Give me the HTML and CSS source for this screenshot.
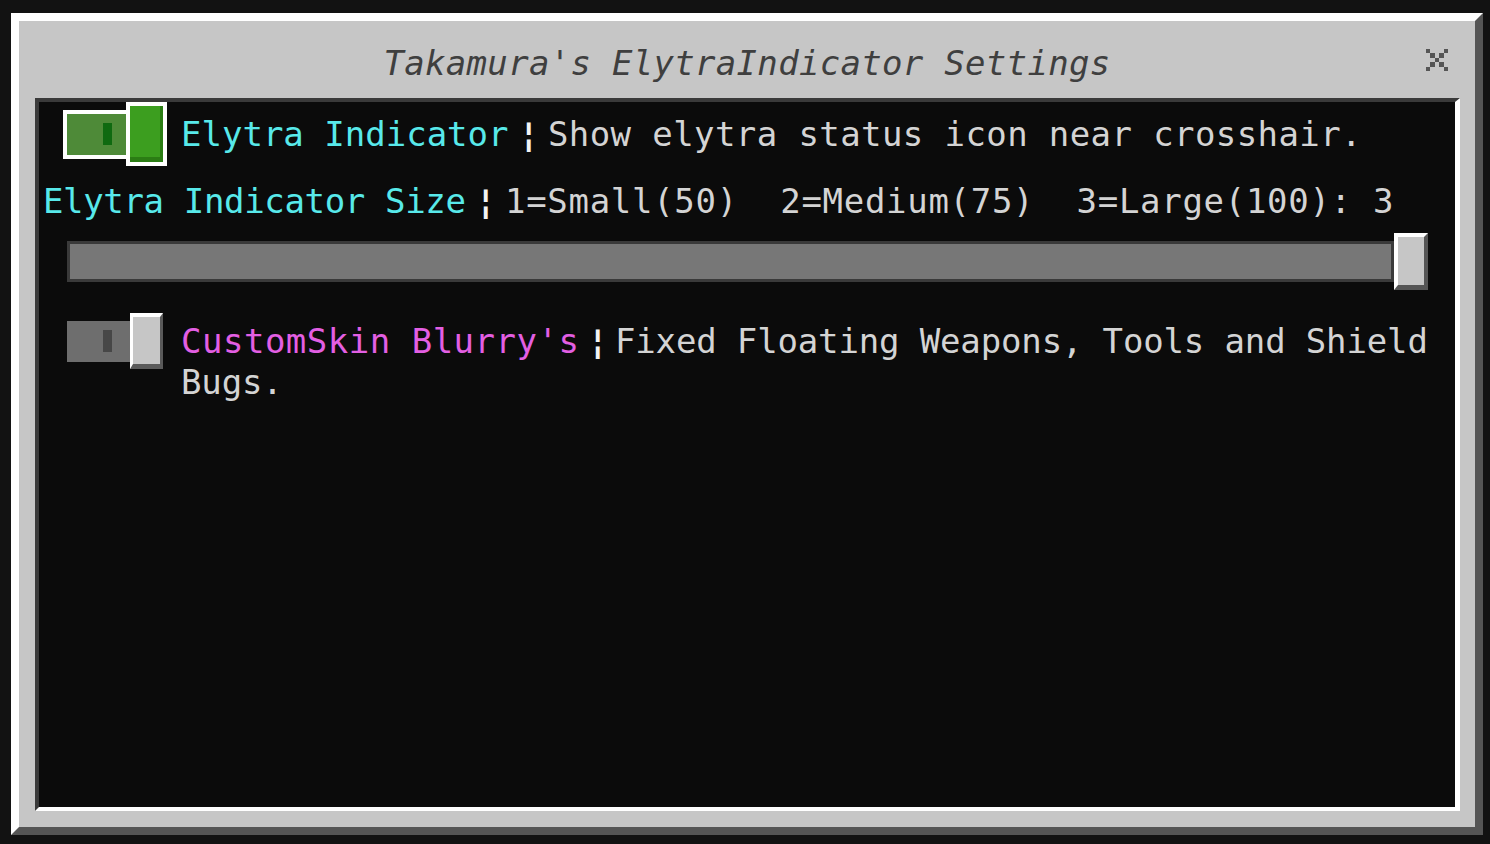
FILE: index.html
```html
<!DOCTYPE html>
<html lang="en">
<head>
<meta charset="utf-8">
<title>Takamura's ElytraIndicator Settings</title>
<link rel="stylesheet" href="styles.css">
</head>
<body>
<div class="screen">
  <div class="dialog">
    <div class="titlebar">
      <span class="spacer"></span>
      <h1 class="title">Takamura's ElytraIndicator Settings</h1>
      <button class="close" aria-label="Close">
        <svg viewBox="0 0 5 5" width="22" height="22" shape-rendering="crispEdges">
          <rect x="0" y="0" width="1" height="1"/>
          <rect x="4" y="0" width="1" height="1"/>
          <rect x="1" y="1" width="1" height="1"/>
          <rect x="3" y="1" width="1" height="1"/>
          <rect x="2" y="2" width="1" height="1"/>
          <rect x="1" y="3" width="1" height="1"/>
          <rect x="3" y="3" width="1" height="1"/>
          <rect x="0" y="4" width="1" height="1"/>
          <rect x="4" y="4" width="1" height="1"/>
        </svg>
      </button>
    </div>
    <div class="panel">
      <div class="toggle-row">
        <div class="toggle on focused">
          <span class="track"><i class="notch"></i></span>
          <span class="knob"></span>
        </div>
        <p class="text ls-r1d"><span class="label aqua ls-r1l">Elytra Indicator</span><span class="sep">¦</span>Show elytra status icon near crosshair.</p>
      </div>

      <div class="slider-block">
        <p class="slider-label ls-r2d"><span class="label aqua ls-r2l">Elytra Indicator Size</span><span class="sep">¦</span>1=Small(50)  2=Medium(75)  3=Large(100): 3</p>
        <div class="slider">
          <div class="slider-track"></div>
          <div class="slider-knob"></div>
        </div>
      </div>

      <div class="toggle-row">
        <div class="toggle off">
          <span class="track"><i class="notch"></i></span>
          <span class="knob"></span>
        </div>
        <p class="text ls-r3d"><span class="label pink ls-r3l">CustomSkin Blurry's</span><span class="sep sep-tight">¦</span><span class="line">Fixed Floating Weapons, Tools and Shield</span> <span class="line">Bugs.</span></p>
      </div>
    </div>
  </div>
</div>
</body>
</html>
```
FILE: styles.css
```css
html, body {
  margin: 0;
  padding: 0;
  background: #121212;
  overflow: hidden;
}

.screen {
  width: 1490px;
  height: 844px;
  padding: 13px 0 0 11px;
  box-sizing: border-box;
  font-family: "DejaVu Sans Mono", "Liberation Mono", monospace;
  font-size: 34px;
}

.dialog {
  width: 1472px;
  height: 822px;
  box-sizing: border-box;
  background: #c6c6c6;
  border-top: 8px solid #ffffff;
  border-left: 8px solid #ffffff;
  border-right: 8px solid #555555;
  border-bottom: 8px solid #555555;
  display: flex;
  flex-direction: column;
}

.titlebar {
  height: 77px;
  display: grid;
  grid-template-columns: 1fr auto 1fr;
  align-items: center;
}

.title {
  margin: 0;
  padding-top: 6px;
  font-size: 34px;
  font-weight: normal;
  font-style: italic;
  color: #3f3f3f;
  letter-spacing: 0.3px;
  white-space: nowrap;
}

.close {
  justify-self: end;
  margin: 0 27px 0 0;
  padding: 0;
  border: 0;
  background: none;
  width: 22px;
  height: 22px;
  display: flex;
}

.close svg {
  fill: #555555;
}

.panel {
  flex: 1;
  margin: 0 15px 16px 16px;
  background: #0b0b0b;
  border-top: 4px solid #3a3a3a;
  border-left: 4px solid #3a3a3a;
  border-right: 5px solid #ffffff;
  border-bottom: 4px solid #ffffff;
  padding: 4px 0 0 0;
  display: flex;
  flex-direction: column;
}

/* toggle rows */
.toggle-row {
  display: flex;
  align-items: flex-start;
  padding-left: 28px;
}

.toggle {
  display: flex;
  align-items: center;
  flex: none;
}

.track {
  width: 63px;
  height: 41px;
  display: flex;
  align-items: center;
  box-sizing: border-box;
  padding-left: 36px;
}

.notch {
  width: 9px;
  height: 22px;
}

.knob {
  width: 33px;
  height: 56px;
  box-sizing: border-box;
}

.toggle.off .track {
  background: #6e6e6e;
}

.toggle.off .notch {
  background: #474747;
}

.toggle.off .knob {
  background: #c6c6c6;
  border-top: 4px solid #ffffff;
  border-left: 3px solid #ffffff;
  border-bottom: 5px solid #5a5a5a;
  border-right: 3px solid #5a5a5a;
}

.toggle.on .track {
  background: #4e8a38;
}

.toggle.on .notch {
  background: #0f6a10;
}

.toggle.on .knob {
  background: #3c9e1f;
  border-bottom: 5px solid #2b7d14;
  border-right: 3px solid #2b7d14;
}

.toggle.focused .track,
.toggle.focused .knob {
  box-shadow: 0 0 0 4px #ffffff;
}

.text {
  margin: 8px 0 0 18px;
  line-height: 41px;
  color: #d4d4d4;
}

.line {
  white-space: nowrap;
}

.label.aqua {
  color: #58e9ea;
}

.label.pink {
  color: #e35fe3;
}

.sep {
  color: #f4f4f4;
  font-weight: bold;
  margin: 0 9px 0 10px;
  letter-spacing: 0;
}

.sep.sep-tight {
  margin: 0 7px 0 8px;
}

.ls-r1l { letter-spacing: 0; }
.ls-r1d { letter-spacing: 0.4px; }
.ls-r2l { letter-spacing: -0.35px; }
.ls-r2d { letter-spacing: 0.7px; }
.ls-r3l { letter-spacing: 0.5px; }
.ls-r3d { letter-spacing: -0.15px; }

/* slider */
.slider-block {
  margin-top: 19px;
  display: flex;
  flex-direction: column;
}

.slider-label {
  margin: 0 0 0 4px;
  line-height: 40px;
  white-space: pre;
  color: #d4d4d4;
}

.slider {
  margin: 12px 0 23px 28px;
  width: 1361px;
  height: 57px;
  display: flex;
  align-items: center;
}

.slider-track {
  flex: 1;
  height: 41px;
  box-sizing: border-box;
  background: #777777;
  border: 3px solid #3a3a3a;
}

.slider-knob {
  width: 34px;
  height: 57px;
  box-sizing: border-box;
  background: #c6c6c6;
  border-top: 4px solid #ffffff;
  border-left: 4px solid #ffffff;
  border-bottom: 5px solid #555555;
  border-right: 4px solid #555555;
}
```
